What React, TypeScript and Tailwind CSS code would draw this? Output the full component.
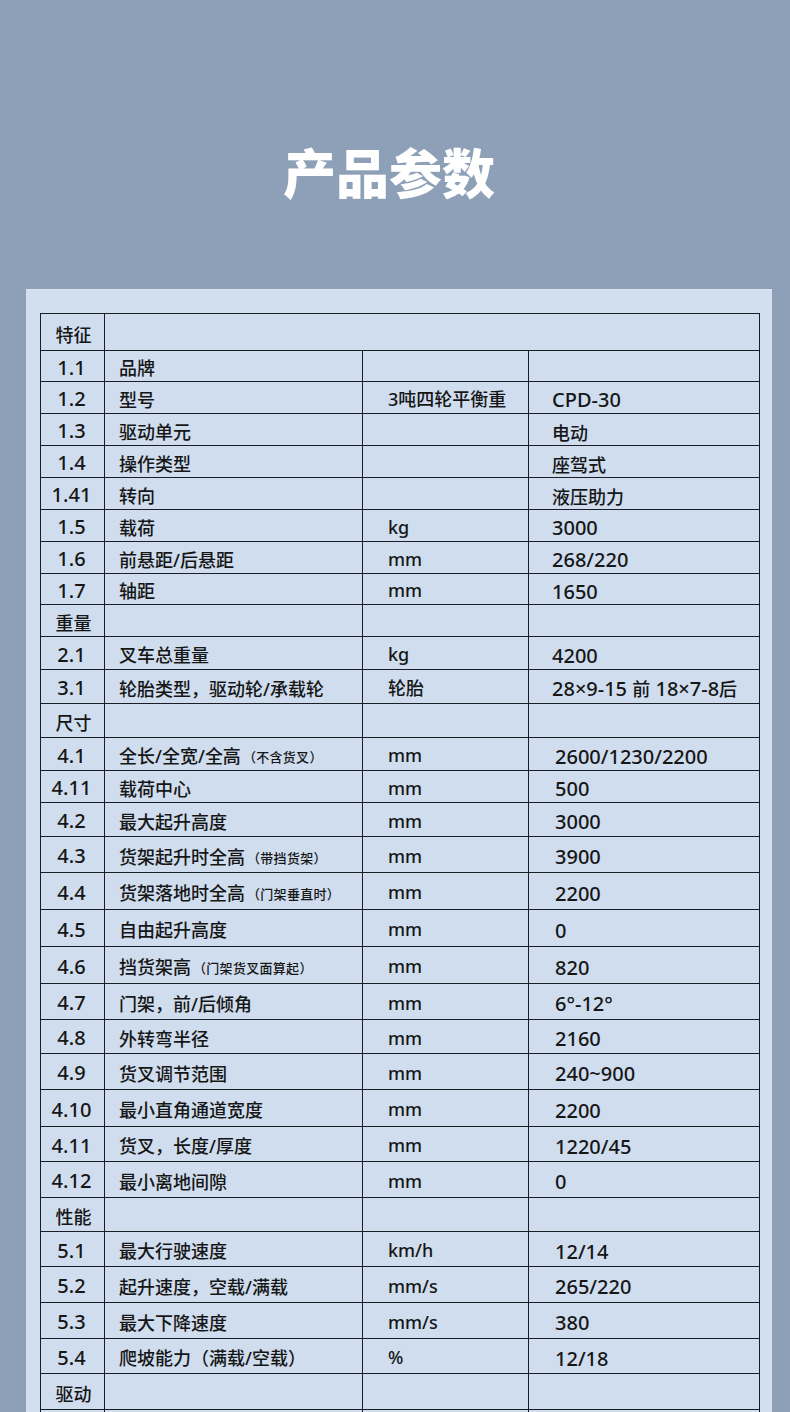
import React from "react";

type Row = {
  n: string;
  l?: string;
  note?: string;
  u?: string;
  v?: string;
  h: number;
  sec?: boolean;
  merged?: boolean;
  shift?: boolean;
};

const rows: Row[] = [
  { n: "特征", sec: true, merged: true, h: 37 },
  { n: "1.1", l: "品牌", h: 31 },
  { n: "1.2", l: "型号", u: "3吨四轮平衡重", v: "CPD-30", h: 32 },
  { n: "1.3", l: "驱动单元", v: "电动", h: 32 },
  { n: "1.4", l: "操作类型", v: "座驾式", h: 32 },
  { n: "1.41", l: "转向", v: "液压助力", h: 32 },
  { n: "1.5", l: "载荷", u: "kg", v: "3000", h: 32 },
  { n: "1.6", l: "前悬距/后悬距", u: "mm", v: "268/220", h: 32 },
  { n: "1.7", l: "轴距", u: "mm", v: "1650", h: 31 },
  { n: "重量", sec: true, h: 32 },
  { n: "2.1", l: "叉车总重量", u: "kg", v: "4200", h: 33 },
  { n: "3.1", l: "轮胎类型，驱动轮/承载轮", u: "轮胎", v: "28×9-15 前 18×7-8后", h: 34 },
  { n: "尺寸", sec: true, h: 34 },
  { n: "4.1", l: "全长/全宽/全高", note: "（不含货叉）", u: "mm", v: "2600/1230/2200", h: 33, shift: true },
  { n: "4.11", l: "载荷中心", u: "mm", v: "500", h: 32, shift: true },
  { n: "4.2", l: "最大起升高度", u: "mm", v: "3000", h: 34, shift: true },
  { n: "4.3", l: "货架起升时全高", note: "（带挡货架）", u: "mm", v: "3900", h: 36, shift: true },
  { n: "4.4", l: "货架落地时全高", note: "（门架垂直时）", u: "mm", v: "2200", h: 37, shift: true },
  { n: "4.5", l: "自由起升高度", u: "mm", v: "0", h: 37, shift: true },
  { n: "4.6", l: "挡货架高", note: "（门架货叉面算起）", u: "mm", v: "820", h: 37, shift: true },
  { n: "4.7", l: "门架，前/后倾角", u: "mm", v: "6°-12°", h: 36, shift: true },
  { n: "4.8", l: "外转弯半径", u: "mm", v: "2160", h: 34, shift: true },
  { n: "4.9", l: "货叉调节范围", u: "mm", v: "240~900", h: 36, shift: true },
  { n: "4.10", l: "最小直角通道宽度", u: "mm", v: "2200", h: 37, shift: true },
  { n: "4.11", l: "货叉，长度/厚度", u: "mm", v: "1220/45", h: 35, shift: true },
  { n: "4.12", l: "最小离地间隙", u: "mm", v: "0", h: 36, shift: true },
  { n: "性能", sec: true, h: 34 },
  { n: "5.1", l: "最大行驶速度", u: "km/h", v: "12/14", h: 35, shift: true },
  { n: "5.2", l: "起升速度，空载/满载", u: "mm/s", v: "265/220", h: 36, shift: true },
  { n: "5.3", l: "最大下降速度", u: "mm/s", v: "380", h: 36, shift: true },
  { n: "5.4", l: "爬坡能力（满载/空载）", u: "%", v: "12/18", h: 35, shift: true },
  { n: "驱动", sec: true, h: 36 },
  { n: "", h: 36 },
];

const CJK = /([\u2E80-\u9FFF\uFF00-\uFFEF\u3000-\u303F]+)/;

function Txt({ s, latin }: { s: string; latin: string }) {
  const parts = s.split(CJK);
  return (
    <span className="whitespace-pre">
      {parts.map((p, i) =>
        i % 2 === 1 ? (
          <span key={i} className="text-[18px] font-['Noto_Sans_CJK_SC',sans-serif]">
            {p}
          </span>
        ) : p ? (
          <span key={i} className={latin}>
            {p}
          </span>
        ) : null
      )}
    </span>
  );
}

function TableRow({ r }: { r: Row }) {
  return (
    <div className="flex border-b border-[#1a1e27]" style={{ height: r.h }}>
      <div className="w-[64px] shrink-0 border-r border-[#1a1e27] flex items-center justify-center pt-[3px] whitespace-nowrap">
        {r.sec ? (
          <span className="text-[18px] font-['Noto_Sans_CJK_SC',sans-serif] pl-[2px]">{r.n}</span>
        ) : (
          <span className="text-[20px] pr-[2px]">{r.n}</span>
        )}
      </div>
      {r.merged ? (
        <div className="flex-1" />
      ) : (
        <>
          <div className="w-[258px] shrink-0 border-r border-[#1a1e27] flex items-center pl-[14px] pt-[3px] whitespace-nowrap">
            {r.l && <Txt s={r.l} latin="text-[18px]" />}
            {r.note && (
              <span className="text-[13px] font-['Noto_Sans_CJK_SC',sans-serif] ml-[2px] mt-[2px] tracking-[0.3px]">
                {r.note}
              </span>
            )}
          </div>
          <div className="w-[166px] shrink-0 border-r border-[#1a1e27] flex items-center pl-[25px] pt-[2px] whitespace-nowrap">
            {r.u && <Txt s={r.u} latin="text-[18px]" />}
          </div>
          <div
            className={
              r.shift
                ? "flex-1 flex items-center pl-[26px] pt-[5px] whitespace-nowrap"
                : "flex-1 flex items-center pl-[23px] pt-[5px] whitespace-nowrap"
            }
          >
            {r.v && <Txt s={r.v} latin="text-[20px]" />}
          </div>
        </>
      )}
    </div>
  );
}

export default function App() {
  return (
    <div className="w-[790px] min-h-[1412px] bg-[#8ea0b8] font-['Noto_Sans','Noto_Sans_CJK_SC',sans-serif] font-medium text-[#161616] leading-none overflow-hidden">
      <div className="pt-[145px] h-[289px] pr-[12px]">
        <h1 className="text-center text-white text-[53px] font-black leading-none font-['Noto_Sans_CJK_SC',sans-serif]">
          产品参数
        </h1>
      </div>
      <div className="ml-[26px] w-[746px] bg-[#d2dfee] pt-[23px] pl-[14px] pb-[40px] border-t border-[#dbe5f1]">
        <div className="w-[720px] border-t border-l border-r border-[#1a1e27] bg-[#cfddee]">
          {rows.map((r, i) => (
            <TableRow key={i} r={r} />
          ))}
        </div>
      </div>
    </div>
  );
}
